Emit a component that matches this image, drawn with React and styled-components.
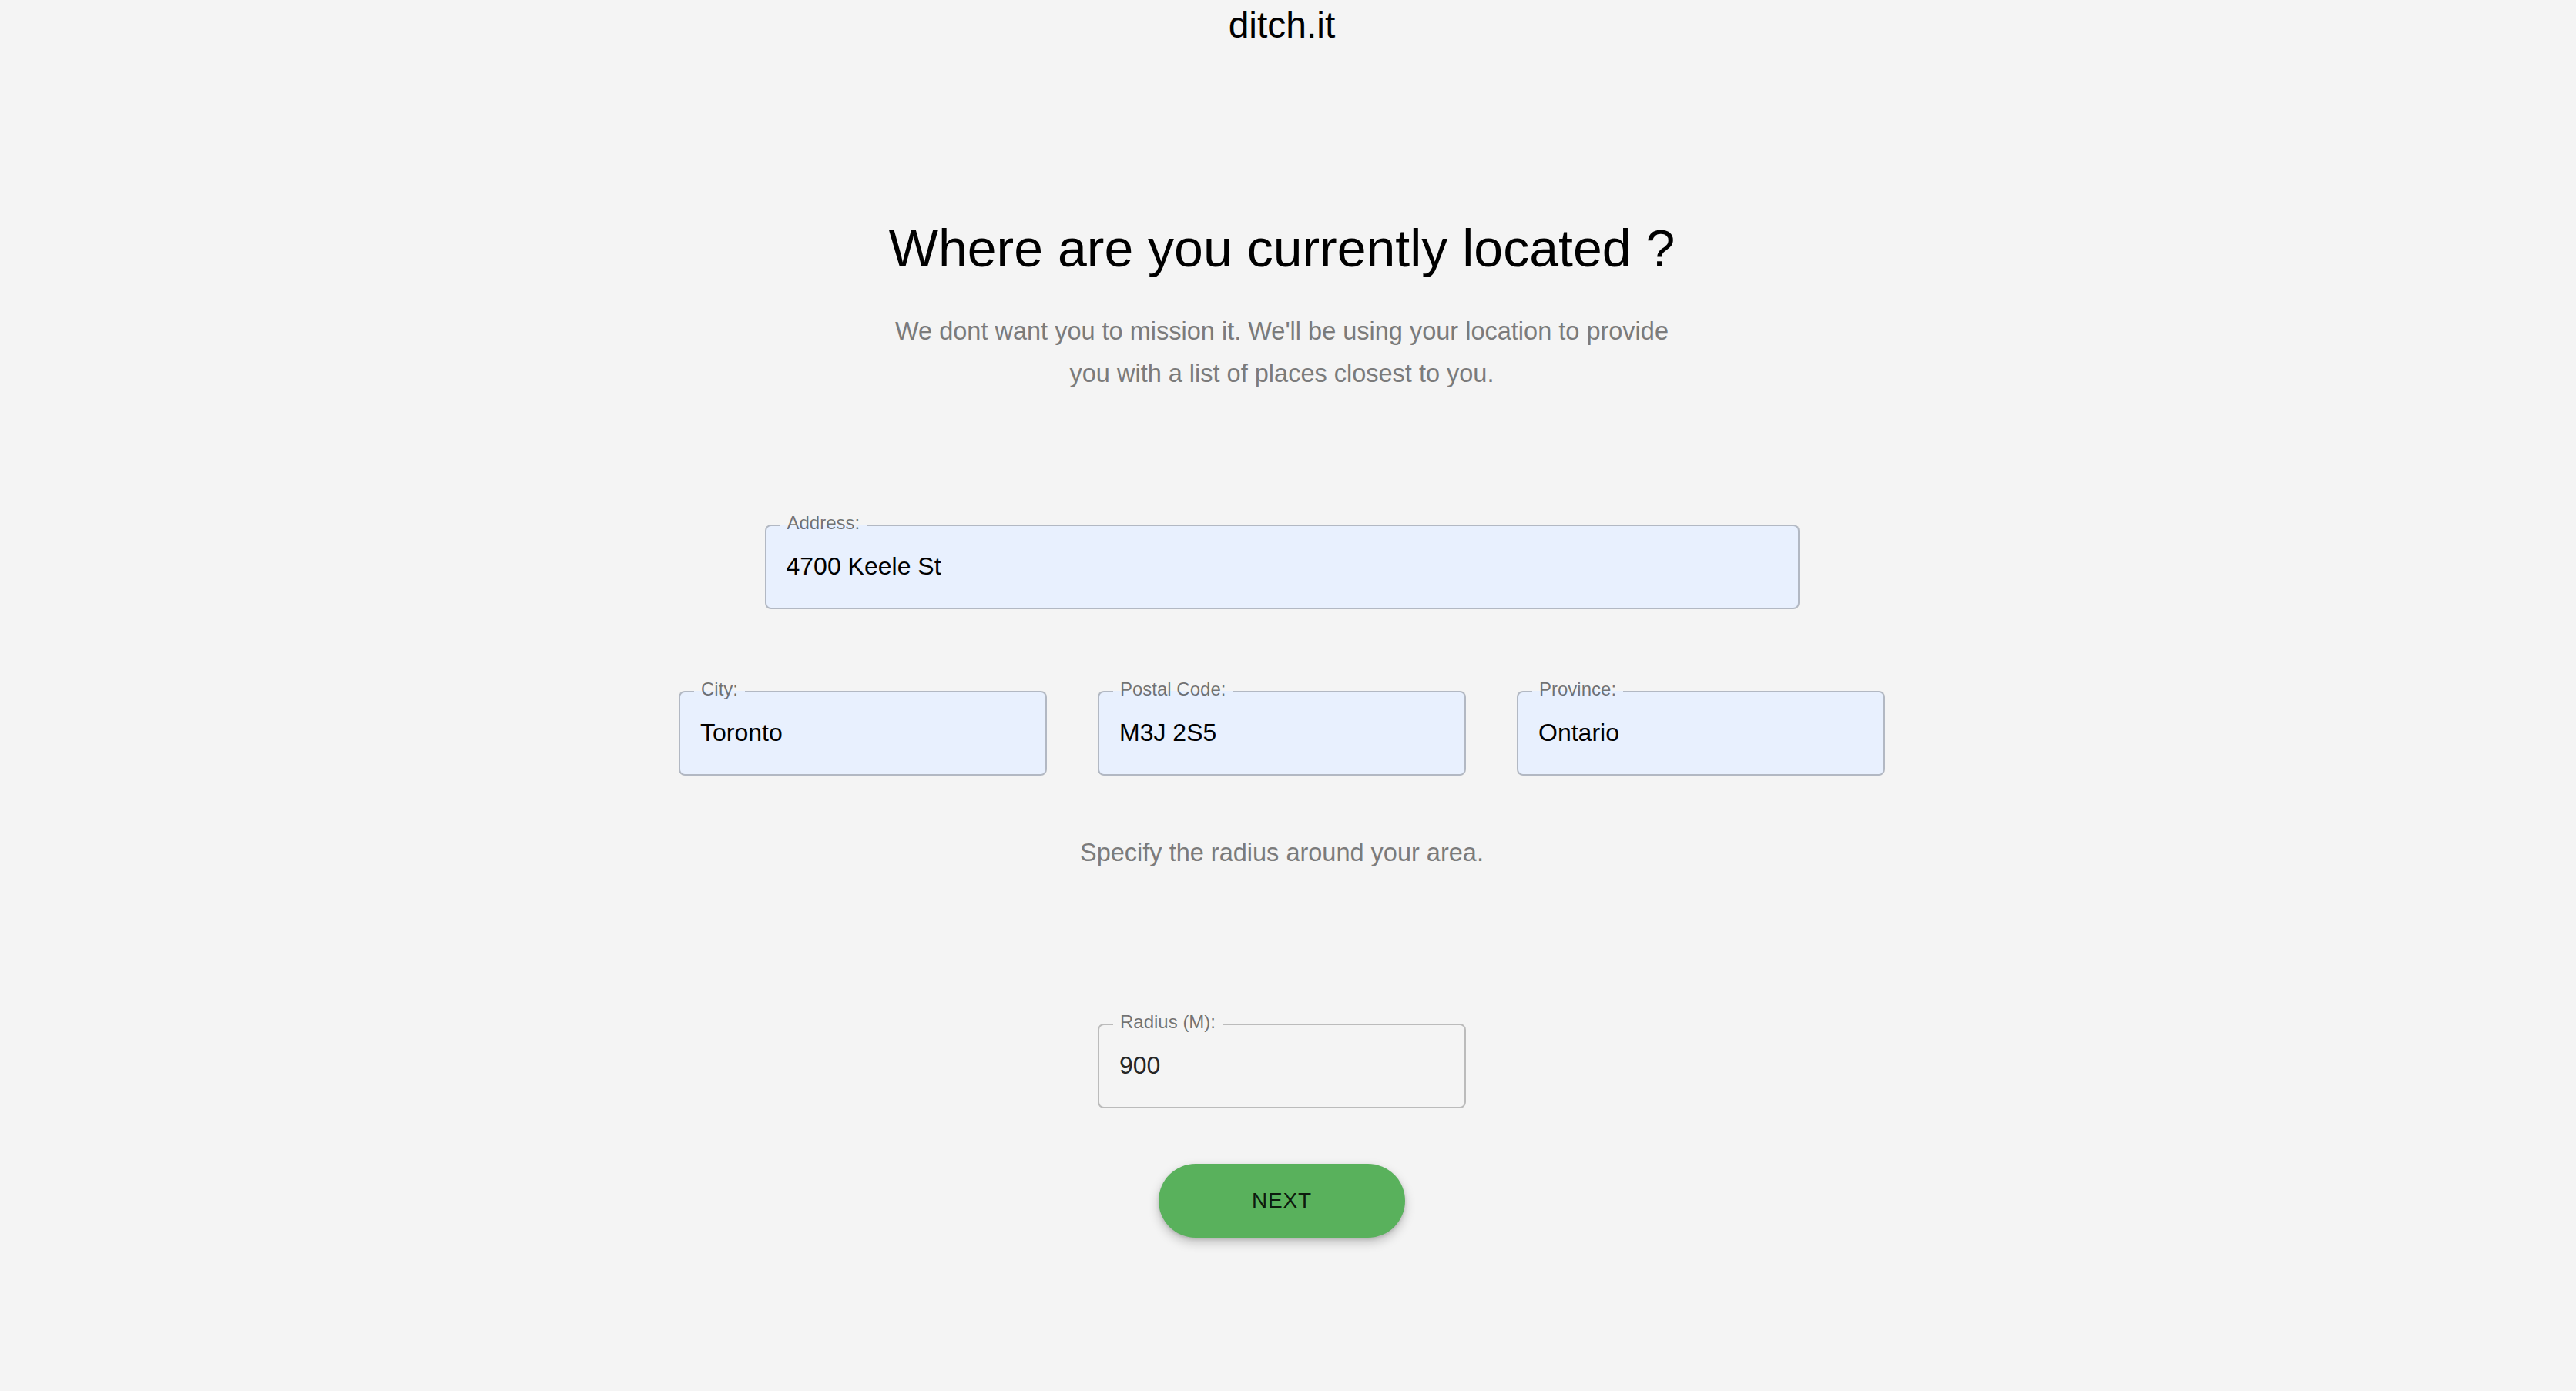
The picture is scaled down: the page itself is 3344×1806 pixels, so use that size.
import styled, { createGlobalStyle } from "styled-components";

const GlobalStyle = createGlobalStyle`
  html, body {
    margin: 0;
    padding: 0;
    background: #f4f4f4;
  }
  body {
    font-family: "Liberation Sans", Arial, Helvetica, sans-serif;
    color: #000;
  }
  * {
    box-sizing: border-box;
  }
`;

function Field({ label, value, autofilled, width }) {
  return (
    <Outline $autofilled={autofilled} $width={width}>
      <Legend>{label}</Legend>
      <Input defaultValue={value} $autofilled={autofilled} />
    </Outline>
  );
}

export default function App() {
  return (
    <>
      <GlobalStyle />
      <Page>
        <Brand>ditch.it</Brand>

        <Title>Where are you currently located ?</Title>
        <Subtitle>
          We dont want you to mission it. We'll be using your location to
          provide you with a list of places closest to you.
        </Subtitle>

        <AddressRow>
          <Field label="Address:" value="4700 Keele St" autofilled width={1343} />
        </AddressRow>

        <FieldRow>
          <Field label="City:" value="Toronto" autofilled width={478} />
          <Field label="Postal Code:" value="M3J 2S5" autofilled width={478} />
          <Field label="Province:" value="Ontario" autofilled width={478} />
        </FieldRow>

        <Hint>Specify the radius around your area.</Hint>

        <RadiusRow>
          <Field label="Radius (M):" value="900" width={478} />
        </RadiusRow>

        <NextButton type="button">NEXT</NextButton>
      </Page>
    </>
  );
}

const Page = styled.div`
  min-height: 100vh;
  display: flex;
  flex-direction: column;
  align-items: center;
  padding: 9px 16px 120px 0;
`;

const Brand = styled.div`
  font-size: 48px;
  line-height: 48px;
  color: #000;
`;

const Title = styled.h1`
  margin: 231px 0 0;
  font-size: 68px;
  line-height: 68px;
  font-weight: 400;
  color: #000;
`;

const Subtitle = styled.p`
  margin: 47px 0 0;
  max-width: 1020px;
  text-align: center;
  font-size: 32.5px;
  line-height: 55px;
  color: #7b7b7b;
`;

const AddressRow = styled.div`
  margin-top: 157px;
  display: flex;
  justify-content: center;
`;

const FieldRow = styled.div`
  margin-top: 95px;
  display: flex;
  gap: 66px;
`;

const RadiusRow = styled.div`
  margin-top: 191px;
  display: flex;
  justify-content: center;
`;

const Hint = styled.p`
  margin: 80px 0 0;
  font-size: 32.5px;
  line-height: 40px;
  color: #7b7b7b;
`;

const Outline = styled.fieldset`
  width: ${(p) => p.$width}px;
  margin: 0;
  padding: 0 18px;
  border: 2px solid rgba(0, 0, 0, 0.23);
  border-radius: 8px;
  background: ${(p) => (p.$autofilled ? "#e8f0fe" : "transparent")};
  min-inline-size: 0;
`;

const Legend = styled.legend`
  padding: 0 9px 6px;
  font-size: 24px;
  line-height: 18px;
  color: rgba(0, 0, 0, 0.55);
`;

const Input = styled.input`
  display: block;
  width: 100%;
  height: 95px;
  margin: 0;
  padding: 0 8px 13px;
  border: none;
  outline: none;
  background: transparent;
  font-family: inherit;
  font-size: 32px;
  color: ${(p) => (p.$autofilled ? "#000" : "rgba(0, 0, 0, 0.87)")};
`;

const NextButton = styled.button`
  margin-top: 72px;
  width: 320px;
  height: 96px;
  border: none;
  border-radius: 48px;
  background: #59b15c;
  color: rgba(0, 0, 0, 0.87);
  font-family: inherit;
  font-size: 28px;
  letter-spacing: 0.8px;
  cursor: pointer;
  box-shadow: 0 6px 14px rgba(0, 0, 0, 0.22), 0 2px 4px rgba(0, 0, 0, 0.12);
`;
